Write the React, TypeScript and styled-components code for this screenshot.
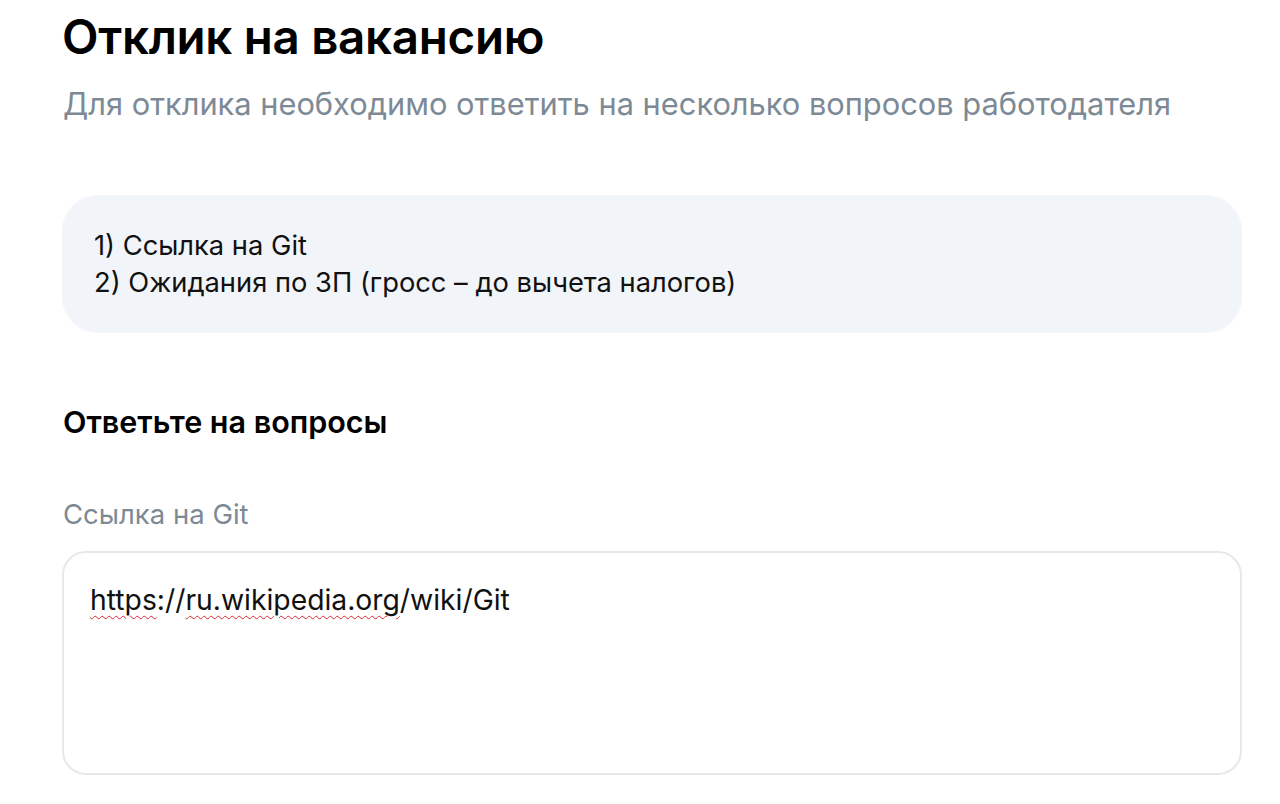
import styled, { createGlobalStyle } from "styled-components";

const GlobalStyle = createGlobalStyle`
  html, body {
    margin: 0;
    padding: 0;
    background: #ffffff;
  }

  *,
  *::before,
  *::after {
    box-sizing: border-box;
  }

  body {
    font-family: Inter, "Noto Sans", sans-serif;
    color: #000000;
  }
`;

const Page = styled.div`
  display: flex;
  flex-direction: column;
  padding: 8px 38px 0 62px;
  width: 1280px;
`;

const Title = styled.h1`
  margin: 0;
  font-size: 47.5px;
  line-height: 58px;
  font-weight: 600;
  letter-spacing: -0.3px;
`;

const Subtitle = styled.p`
  margin: 18px 0 0 1px;
  font-size: 30.8px;
  line-height: 40px;
  font-weight: 400;
  color: #7d8a96;
`;

const InfoBox = styled.div`
  margin-top: 71px;
  background: #f1f4f8;
  border-radius: 36px;
  padding: 32px 32px 35px;
  height: 138px;
`;

const InfoLine = styled.div`
  font-size: 27.3px;
  line-height: 37px;
  color: #111111;
`;

const SectionTitle = styled.h2`
  margin: 70px 0 0 1px;
  font-size: 30.5px;
  line-height: 38px;
  font-weight: 600;
`;

const FieldLabel = styled.label`
  display: block;
  margin: 55px 0 0 1px;
  font-size: 27.5px;
  line-height: 36px;
  color: #7d8a96;
`;

const AnswerBox = styled.div`
  margin-top: 19px;
  height: 224px;
  border: 2px solid #e6e8eb;
  border-radius: 24px;
  padding: 29px 26px;
  font-size: 28.3px;
  line-height: 36px;
  color: #111111;
`;

const Misspelled = styled.span`
  text-decoration: underline wavy #d8283a;
  text-decoration-thickness: 1px;
  text-underline-offset: 5px;
`;

export default function App() {
  return (
    <>
      <GlobalStyle />
      <Page>
        <Title>Отклик на вакансию</Title>
        <Subtitle>Для отклика необходимо ответить на несколько вопросов работодателя</Subtitle>
        <InfoBox>
          <InfoLine>1) Ссылка на Git</InfoLine>
          <InfoLine>2) Ожидания по ЗП (гросс – до вычета налогов)</InfoLine>
        </InfoBox>
        <SectionTitle>Ответьте на вопросы</SectionTitle>
        <FieldLabel>Ссылка на Git</FieldLabel>
        <AnswerBox>
          <Misspelled>https</Misspelled>://<Misspelled>ru.wikipedia.org</Misspelled>/wiki/Git
        </AnswerBox>
      </Page>
    </>
  );
}
